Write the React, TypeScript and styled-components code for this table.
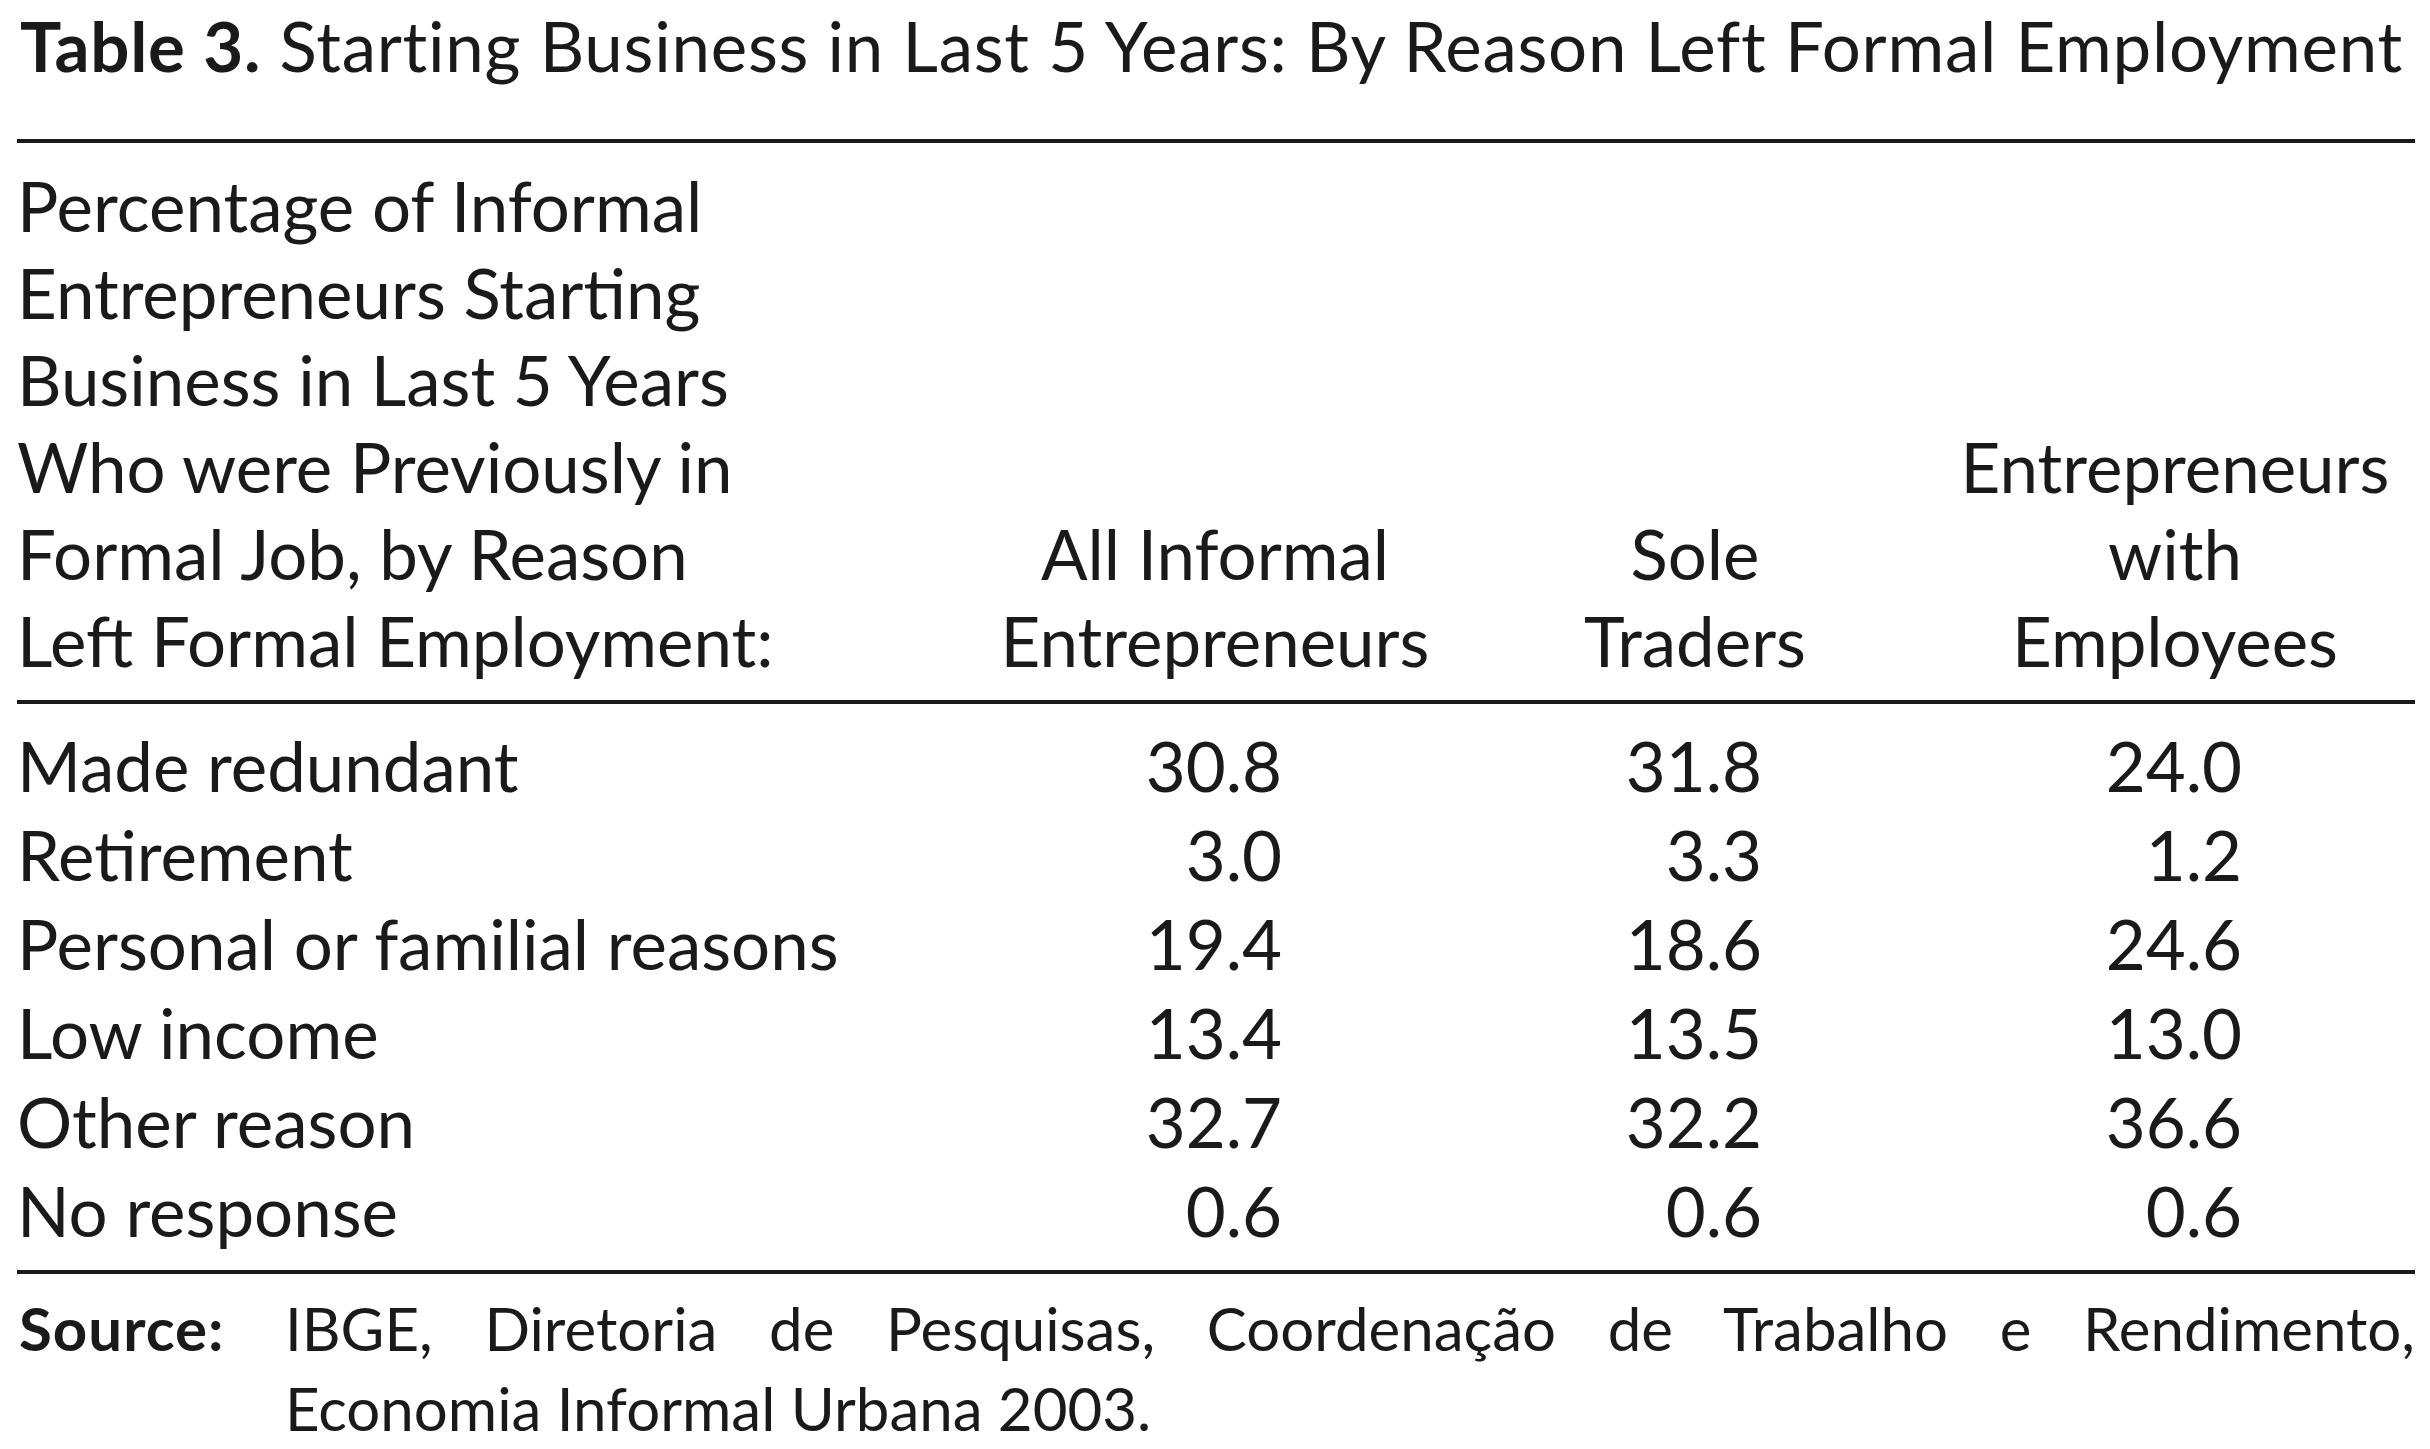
import { FC } from "react";
import styled, { createGlobalStyle } from "styled-components";

const GlobalStyle = createGlobalStyle`
  html, body {
    margin: 0;
    padding: 0;
    background: #ffffff;
  }
  body {
    font-family: Lato, "Open Sans", "Liberation Sans", sans-serif;
    color: #1a1a1a;
  }
`;

type Row = {
  reason: string;
  values: string[];
};

const rows: Row[] = [
  { reason: "Made redundant", values: ["30.8", "31.8", "24.0"] },
  { reason: "Retirement", values: ["3.0", "3.3", "1.2"] },
  { reason: "Personal or familial reasons", values: ["19.4", "18.6", "24.6"] },
  { reason: "Low income", values: ["13.4", "13.5", "13.0"] },
  { reason: "Other reason", values: ["32.7", "32.2", "36.6"] },
  { reason: "No response", values: ["0.6", "0.6", "0.6"] },
];

const App: FC = () => {
  return (
    <>
      <GlobalStyle />
      <StyledPage>
        <StyledTitle>
          <StyledBold>Table 3.</StyledBold> Starting Business in Last 5 Years: By
          Reason Left Formal Employment
        </StyledTitle>

        <StyledRule />

        <StyledHeader>
          <StyledHeadCell>
            Percentage of Informal
            <br />
            Entrepreneurs Starting
            <br />
            Business in Last 5 Years
            <br />
            Who were Previously in
            <br />
            Formal Job, by Reason
            <br />
            Left Formal Employment:
          </StyledHeadCell>
          <StyledHeadCell $center>
            All Informal
            <br />
            Entrepreneurs
          </StyledHeadCell>
          <StyledHeadCell $center>
            Sole
            <br />
            Traders
          </StyledHeadCell>
          <StyledHeadCell $center>
            Entrepreneurs
            <br />
            with
            <br />
            Employees
          </StyledHeadCell>
        </StyledHeader>

        <StyledRule />

        <StyledBody>
          {rows.map((row) => (
            <StyledRow key={row.reason}>
              <StyledLabel>{row.reason}</StyledLabel>
              {row.values.map((value, i) => (
                <StyledNumber key={i}>{value}</StyledNumber>
              ))}
            </StyledRow>
          ))}
        </StyledBody>

        <StyledRule />

        <StyledSource>
          <StyledSourceLabel>Source:</StyledSourceLabel>
          <StyledSourceText>
            <StyledSourceLine $justify>
              IBGE, Diretoria de Pesquisas, Coordenação de Trabalho e Rendimento,
            </StyledSourceLine>
            <StyledSourceLine>Economia Informal Urbana 2003.</StyledSourceLine>
          </StyledSourceText>
        </StyledSource>
      </StyledPage>
    </>
  );
};

export default App;

const StyledPage = styled.div`
  width: 2398px;
  padding-left: 17px;
  font-size: 69px;
`;

const StyledTitle = styled.div`
  margin-top: 5px;
  line-height: 1.2;
  white-space: nowrap;
  padding-left: 3px;
  letter-spacing: 0.75px;
`;

const StyledBold = styled.span`
  font-weight: 700;
`;

const StyledRule = styled.div`
  height: 4px;
  background: #1a1a1a;
  margin-top: 51px;
`;

const StyledHeader = styled.div`
  display: grid;
  grid-template-columns: 958px repeat(3, 480px);
  align-items: end;
  padding: 19px 0 16px;
  line-height: 87px;

  & + ${StyledRule} {
    margin-top: 0;
  }
`;

const StyledHeadCell = styled.div<{ $center?: boolean }>`
  text-align: ${({ $center }) => ($center ? "center" : "left")};
  white-space: nowrap;
`;

const StyledBody = styled.div`
  display: flex;
  flex-direction: column;
  padding: 17px 0 15px;

  & + ${StyledRule} {
    margin-top: 0;
  }
`;

const StyledRow = styled.div`
  display: grid;
  grid-template-columns: 958px repeat(3, 480px);
  height: 89px;
  line-height: 89px;
`;

const StyledLabel = styled.div`
  white-space: nowrap;
`;

const StyledNumber = styled.div`
  text-align: right;
  padding-right: 173px;
`;

const StyledSource = styled.div`
  display: flex;
  margin-top: 14px;
  font-size: 60px;
  line-height: 80px;
`;

const StyledSourceLabel = styled.div`
  flex: 0 0 268px;
  font-weight: 700;
  padding-left: 2px;
  box-sizing: border-box;
  letter-spacing: 1px;
`;

const StyledSourceText = styled.div`
  flex: 1;
  display: flex;
  flex-direction: column;
`;

const StyledSourceLine = styled.div<{ $justify?: boolean }>`
  white-space: nowrap;
  text-align: ${({ $justify }) => ($justify ? "justify" : "left")};
  text-align-last: ${({ $justify }) => ($justify ? "justify" : "auto")};
  ${({ $justify }) => $justify && "white-space: normal;"}
`;
